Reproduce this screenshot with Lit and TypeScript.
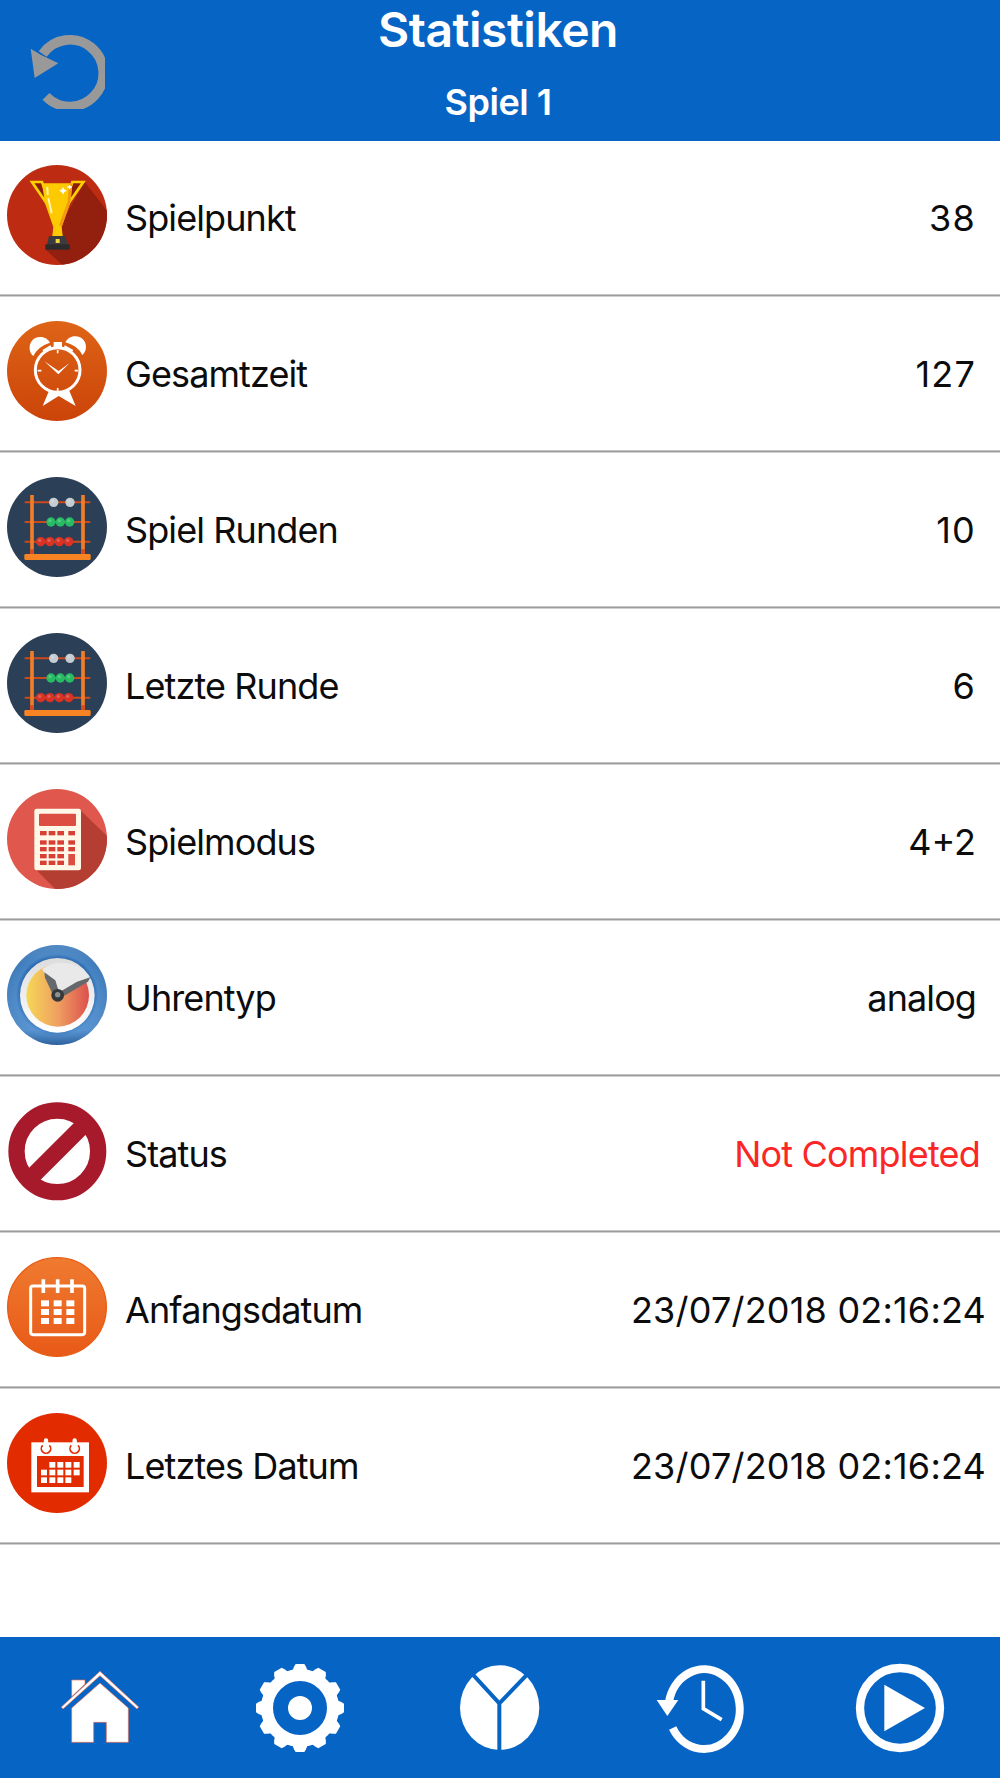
import { LitElement, html, css, svg } from "lit";
import { customElement, property } from "lit/decorators.js";

const trophy = svg`
  <clipPath id="disc"><circle cx="150" cy="150" r="150"/></clipPath>
  <circle cx="150" cy="150" r="150" fill="#bc2b12"/>
  <path clip-path="url(#disc)" d="M233 50 310 150 300 300H166L115 253 160 180Z" fill="#93200e"/>
  <path d="M75 51H105L137 142ZM229 51H196L166 142Z" fill="#8c1c0c" stroke="#fbd000" stroke-width="8"/>
  <path d="M105 55H196L191 110 164 186 167 213H136L139 186 114 115Z" fill="#fdc900"/>
  <path d="M186 55H196L190 112 164 186 156 180 182 110Z" fill="#f39a12"/>
  <path d="M121 66 122 90M124 99 134 145" stroke="#fff3b0" stroke-width="6"/>
  <path d="M168 68 171 74 178 77 171 80 168 87 165 80 158 77 165 74ZM188 60 190 64 195 66 190 68 188 73 186 68 181 66 186 64Z" fill="#fff" stroke="#fff" stroke-width="2"/>
  <path d="M126 213H175L182 239H120Z" fill="#3b3b3f"/>
  <rect x="115" y="238" width="73" height="16" fill="#2b2b2e"/>
  <rect x="146" y="222" width="12" height="12" fill="#f6d53c"/>
`;

const alarm = svg`
  <linearGradient id="g" x2="0" y2="1"><stop offset="0" stop-color="#de6416"/><stop offset="1" stop-color="#cb4409"/></linearGradient>
  <circle cx="150" cy="150" r="150" fill="url(#g)"/>
  <g fill="#fff">
    <path d="M79 105C60 90 65 50 98 48C112 47 123 54 129 65Q93 76 79 105Z"/>
    <path d="M226 102C245 88 240 48 206 46C192 45 181 53 175 64Q211 73 226 102Z"/>
    <path d="M140 63H165V82H140Z"/>
    <path d="M127 207 107 255 155 225 206 255 185 205 152 214Z"/>
    <path d="M112 121 155 150 188 126 154 160Z"/>
  </g>
  <path d="M108 90 132 76M197 90 172 76" stroke="#fff" stroke-width="7"/>
  <circle cx="152" cy="147" r="67" fill="none" stroke="#fff" stroke-width="9"/>
  <path d="M152 87V97M152 201V211M92 149H103M203 149H213" stroke="#fff" stroke-width="5"/>
`;

const bead = (x: number, y: number, fill: string) =>
  svg`<circle cx=${x} cy=${y} r="14" fill=${fill}/><circle cx=${x - 3} cy=${y - 4} r="5" fill="#fff" opacity=".22"/>`;

const abacus = svg`
  <circle cx="150" cy="150" r="150" fill="#2b3f56"/>
  <path d="M53 76H250M53 135H250M53 194H250" stroke="#cb4a1c" stroke-width="6"/>
  <path d="M75 54V234M228 54V234" stroke="#f27d28" stroke-width="11"/>
  <path d="M75 217V232M228 217V232" stroke="#d8471f" stroke-width="11"/>
  <rect x="52" y="231" width="199" height="18" rx="4" fill="#f78323"/>
  ${[140, 189].map((x) => bead(x, 76, "#c3ccd2"))}
  ${[132, 160, 188].map((x) => bead(x, 135, "#27bb63"))}
  ${[101, 129, 157, 185].map((x) => bead(x, 194, "#d93325"))}
`;

const calculator = svg`
  <clipPath id="disc"><circle cx="150" cy="150" r="150"/></clipPath>
  <circle cx="150" cy="150" r="150" fill="#df574d"/>
  <path clip-path="url(#disc)" d="M220 64 304 145 300 300H145L88 243Z" fill="#b43e31"/>
  <rect x="82" y="59" width="140" height="185" rx="7" fill="#fff7e8"/>
  <rect x="96" y="74" width="111" height="37" rx="3" fill="#dc4d42"/>
  ${[126, 154, 174, 195, 215].map((y, row) =>
    [99, 125, 151, 184].map((x, col) =>
      row > 2 && col === 3 ? "" : svg`<rect x=${x} y=${y} width="20" height="13" fill="#d93f35"/>`
    )
  )}
  <rect x="184" y="195" width="20" height="34" fill="#dc4d42"/>
`;

const clock = svg`
  <radialGradient id="rim"><stop offset=".72" stop-color="#1d5ca8"/><stop offset=".82" stop-color="#4684c4"/><stop offset="1" stop-color="#3f7ab8"/></radialGradient>
  <linearGradient id="low" x2="0" y2="1"><stop offset="0" stop-color="#6398cc" stop-opacity=".5"/><stop offset=".2" stop-color="#6398cc" stop-opacity="0"/><stop offset=".85" stop-color="#6ba6e0" stop-opacity=".5"/><stop offset="1" stop-color="#20508a" stop-opacity=".6"/></linearGradient>
  <linearGradient id="dial"><stop offset="0" stop-color="#f6d757"/><stop offset=".5" stop-color="#efa060"/><stop offset="1" stop-color="#dc504e"/></linearGradient>
  <linearGradient id="plate" x2="0" y2="1"><stop offset="0" stop-color="#dcdcdc"/><stop offset="1" stop-color="#fff"/></linearGradient>
  <circle cx="150" cy="150" r="150" fill="url(#rim)"/>
  <circle cx="150" cy="150" r="150" fill="url(#low)"/>
  <circle cx="151" cy="151" r="112" fill="url(#plate)"/>
  <circle cx="152" cy="151" r="94" fill="url(#dial)"/>
  <path d="M152 151 105 72C150 40 215 50 248 96Z" fill="#e9e9ea"/>
  <path d="M158 148 145 106 112 82 114 98 140 154ZM154 143 210 110 250 97 243 110 176 150 158 158Z" fill="#66696b"/>
  <circle cx="152" cy="151" r="19" fill="#35383b"/>
  <circle cx="152" cy="149" r="8" fill="#8d8f91"/>
`;

const forbidden = svg`
  <circle cx="151" cy="151" r="122.5" fill="none" stroke="#a61a2b" stroke-width="49"/>
  <path d="M72 230 229 73" stroke="#a61a2b" stroke-width="50"/>
`;

const calendar = svg`
  <linearGradient id="g" x2="0" y2="1"><stop offset="0" stop-color="#ef7a30"/><stop offset="1" stop-color="#e85a17"/></linearGradient>
  <circle cx="150" cy="150" r="148" fill="url(#g)" stroke="#e95a12" stroke-width="4"/>
  <rect x="71" y="87" width="162" height="146" rx="7" fill="none" stroke="#fff" stroke-width="9"/>
  <path d="M109 67V108M152 67V108M195 67V108" stroke="#fff" stroke-width="11"/>
  ${[130, 156, 183].map((y) => [102, 140, 178].map((x) => svg`<rect x=${x} y=${y} width="24" height="18" fill="#fff"/>`))}
`;

const calendarSolid = svg`
  <circle cx="150" cy="150" r="150" fill="#e22c00"/>
  <rect x="73" y="88" width="173" height="150" fill="#fff"/>
  <rect x="90" y="129" width="140" height="93" fill="#e22c00"/>
  ${[147, 170, 193].map((y, row) =>
    [102, 127, 151, 175, 200].map((x, col) =>
      (row === 0 && col === 0) || (row === 2 && col === 4) ? "" : svg`<rect x=${x} y=${y} width="18" height="17" fill="#fff"/>`
    )
  )}
  <path d="M107 97A14 14 0 1 0 127 97M193 97A14 14 0 1 0 213 97" fill="none" stroke="#e22c00" stroke-width="5"/>
  <path d="M117 82V106M203 82V106" stroke="#fff" stroke-width="13" stroke-linecap="round"/>
`;

const home = svg`
  <g fill="#fff" stroke="#ee6a4c" stroke-width="2">
    <path d="M65 66H105V78L65 116Z"/>
    <path d="M150 75 235 150V253H169V193H131V253H65V150Z"/>
    <path d="M34 147 150 40 266 147 261 153 150 53 39 153Z"/>
  </g>
`;

const gear = svg`
  <circle cx="150" cy="150" r="99" fill="none" stroke="#fff" stroke-width="36"/>
  <circle cx="150" cy="150" r="36" fill="#fff"/>
  ${[...Array(12).keys()].map(
    (i) => svg`<path d="M137 18H163L168 26 173 39H127L132 26Z" fill="#fff" transform="rotate(${i * 30} 150 150)"/>`
  )}
`;

const pie = svg`
  <ellipse cx="149" cy="149" rx="119" ry="127" fill="#fff"/>
  <path d="M66 47 148 136 234 47M148 134V280" fill="none" stroke="#0664c5" stroke-width="12"/>
`;

const history = svg`
  <path d="M57 132A107 119.5 0 1 1 68 210" fill="none" stroke="#fff" stroke-width="24"/>
  <path d="M20 126H85L52 174Z" fill="#fff"/>
  <path d="M160 68V152L215 185" fill="none" stroke="#fff" stroke-width="11"/>
`;

const play = svg`
  <circle cx="150" cy="150" r="120" fill="none" stroke="#fff" stroke-width="25"/>
  <path d="M103 80 225 150 103 220Z" fill="#fff"/>
`;

const rows = [
  { icon: trophy, label: "Spielpunkt", value: "38", kind: "number" },
  { icon: alarm, label: "Gesamtzeit", value: "127", kind: "number" },
  { icon: abacus, label: "Spiel Runden", value: "10", kind: "number" },
  { icon: abacus, label: "Letzte Runde", value: "6", kind: "number" },
  { icon: calculator, label: "Spielmodus", value: "4+2", kind: "mode" },
  { icon: clock, label: "Uhrentyp", value: "analog" },
  { icon: forbidden, label: "Status", value: "Not Completed", kind: "open" },
  { icon: calendar, label: "Anfangsdatum", value: "23/07/2018 02:16:24", kind: "date" },
  { icon: calendarSolid, label: "Letztes Datum", value: "23/07/2018 02:16:24", kind: "date" },
];

@customElement("stat-row")
class StatRow extends LitElement {
  @property() label = "";
  @property() value = "";
  @property() kind = "";
  @property({ attribute: false }) icon: unknown;

  static styles = css`
    :host {
      display: block;
      height: 156px;
      box-sizing: border-box;
      border-bottom: 1px solid #9c9c9c;
      box-shadow: 0 1px 0 #d0d0d0, inset 0 -1px 0 #c4c4c4;
    }
    .row {
      display: flex;
      align-items: flex-start;
      padding: 25px 24px 0 7px;
      font-size: 36px;
      line-height: 106px;
      letter-spacing: -0.9px;
      color: #0c0c0c;
      white-space: nowrap;
    }
    .row.open {
      padding-right: 20px;
    }
    .row.date {
      padding-right: 14px;
    }
    svg {
      display: block;
      width: 100px;
      height: 100px;
      margin-right: 18px;
    }
    .label {
      flex: 1;
    }
    .number .value {
      letter-spacing: 1.2px;
    }
    .mode .value {
      letter-spacing: 0;
    }
    .date .value {
      letter-spacing: 0.2px;
    }
    .open .value {
      letter-spacing: -0.8px;
      color: #fb2626;
    }
  `;

  render() {
    return html`
      <div class="row ${this.kind}">
        <svg viewBox="0 0 300 300">${this.icon}</svg>
        <span class="label">${this.label}</span>
        <span class="value">${this.value}</span>
      </div>
    `;
  }
}

@customElement("app-root")
class AppRoot extends LitElement {
  static styles = css`
    :host {
      display: flex;
      flex-direction: column;
      height: 1778px;
      background: #fff;
      font-family: Inter, "Liberation Sans", sans-serif;
    }
    header {
      display: grid;
      grid-template-columns: 105px 1fr 109px;
      height: 141px;
      background: #0664c5;
      color: #fff;
    }
    .back {
      width: 75px;
      height: 75px;
      margin: 34px 0 0 30px;
    }
    .titles {
      text-align: center;
    }
    h1 {
      margin: 0;
      font-size: 48px;
      line-height: 60px;
      font-weight: 600;
      letter-spacing: -0.5px;
    }
    h2 {
      margin: 14px 0 0;
      font-size: 36px;
      line-height: 56px;
      font-weight: 600;
      letter-spacing: -0.5px;
    }
    main {
      flex: 1;
      margin-top: -1px;
    }
    nav {
      display: grid;
      grid-template-columns: repeat(5, 200px);
      place-items: center;
      height: 141px;
      background: #0664c5;
    }
    nav svg {
      width: 100px;
      height: 100px;
    }
  `;

  render() {
    return html`
      <header>
        <svg class="back" viewBox="0 0 225 225">
          <path d="M38 60A100 100 0 1 1 48 187" fill="none" stroke="#999" stroke-width="29"/>
          <path d="M2 44 32 62 85 88 14 132Z" fill="#999"/>
        </svg>
        <div class="titles">
          <h1>Statistiken</h1>
          <h2>Spiel 1</h2>
        </div>
      </header>
      <main>
        ${rows.map(
          (r) => html`<stat-row .icon=${r.icon} label=${r.label} value=${r.value} kind=${r.kind ?? ""}></stat-row>`
        )}
      </main>
      <nav>
        ${[home, gear, pie, history, play].map((icon) => html`<svg viewBox="0 0 300 300">${icon}</svg>`)}
      </nav>
    `;
  }
}
